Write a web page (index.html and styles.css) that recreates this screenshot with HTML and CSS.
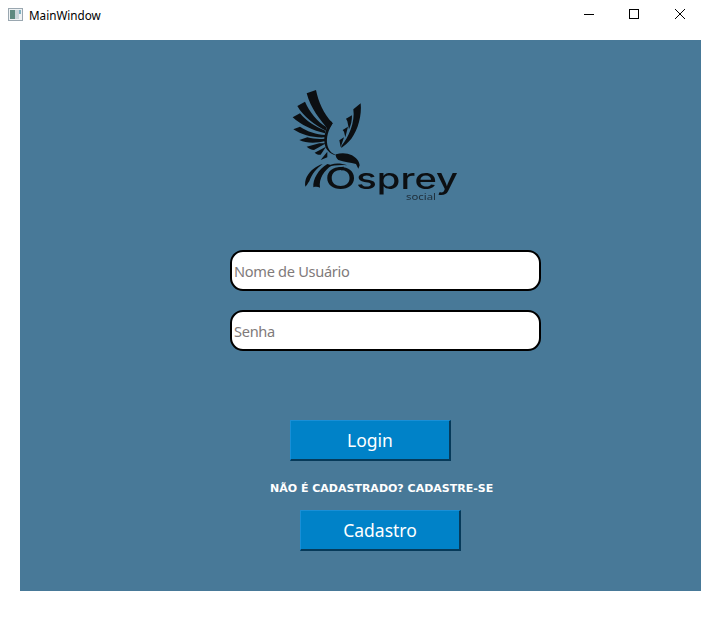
FILE: index.html
```html
<!DOCTYPE html>
<html lang="pt">
<head>
<meta charset="utf-8">
<title>MainWindow</title>
<link rel="stylesheet" href="styles.css">
</head>
<body>
<header class="titlebar">
  <div class="title">
    <svg class="app-icon" width="16" height="16" viewBox="0 0 16 16"><rect x="0.5" y="1.5" width="14" height="12" fill="#eef2f4" stroke="#9aa7b0"/><rect x="2" y="3" width="5" height="9" fill="#5d8a80"/><rect x="7" y="3" width="4" height="9" fill="#c9d6da"/><rect x="11" y="3" width="2" height="4" fill="#7fb0c0"/></svg>
    <span>MainWindow</span>
  </div>
  <div class="controls">
    <svg width="46" height="30" viewBox="0 0 46 30"><path d="M19 14.5h10" stroke="#000" fill="none"/></svg>
    <svg width="46" height="30" viewBox="0 0 46 30"><rect x="18.5" y="9.5" width="9" height="9" stroke="#000" fill="none"/></svg>
    <svg width="46" height="30" viewBox="0 0 46 30"><path d="M18 9l10 10M28 9L18 19" stroke="#000" fill="none"/></svg>
  </div>
</header>
<main class="panel">
  <svg class="logo" width="170" height="115" viewBox="0 0 170 115">
    <g transform="translate(-22 -9) scale(.33333)" fill="#0c0f12">
      <path d="M110 40L138 30C145 65 160 100 188 130L176 150C150 120 122 85 110 40Z"/>
      <path d="M82 78L105 65C118 95 142 125 170 142L168 152C135 135 100 110 82 78Z"/>
      <path d="M68 112L90 100C108 122 135 140 166 152L165 160C130 152 92 135 68 112Z"/>
      <path d="M70 148L90 140C112 155 140 163 165 165L165 172C130 174 95 165 70 148Z"/>
      <path d="M88 180L112 172C130 177 150 178 165 176L165 183C140 190 108 190 88 180Z"/>
      <path d="M110 200L148 190L168 190L132 210C124 209 116 205 110 200Z"/>
      <path d="M134 218L168 200L152 224C145 225 138 222 134 218Z"/>
      <path d="M152 240L172 215L172 232Z"/>
      <path d="M188 130C175 150 168 172 172 195C176 215 190 224 206 226C188 228 168 214 164 192C160 168 168 142 182 122Z"/>
      <path d="M198 223C214 218 232 219 246 226C258 233 268 243 269 256L265 266L258 252C242 248 222 245 205 240C200 236 196 230 198 223Z"/>
      <path d="M250 88L272 70C276 105 264 150 244 176C234 188 224 196 214 204L214 198C236 174 256 125 250 88Z"/>
      <path d="M228 116L246 106C246 122 243 136 237 148L232 124Z"/>
      <path d="M218 150L234 140L226 172L222 155Z"/>
      <path d="M208 181L222 172L212 202Z"/>
      <path d="M110 291C122 270 138 258 158 252C140 265 125 282 118 304C112 312 110 318 106 320C104 310 106 300 110 291Z"/>
      <path d="M130 322C128 298 145 268 172 252L186 256C162 272 146 296 150 323C144 320 136 320 130 322Z"/>
      <path d="M170 262C182 250 205 246 232 256C210 254 190 256 170 262Z"/>
      <path d="M205 262L222 260L216 272L211 267L208 270Z"/>
    </g>
    <text class="logo-word" x="33" y="100" textLength="133" lengthAdjust="spacingAndGlyphs"><tspan class="logo-cap">O</tspan>sprey</text>
    <text class="logo-sub" x="114" y="111" textLength="30" lengthAdjust="spacingAndGlyphs">social</text>
  </svg>
  <div class="field first"><span>Nome de Usuário</span></div>
  <div class="field second"><span>Senha</span></div>
  <button class="btn login" type="button">Login</button>
  <p class="hint">NÃO É CADASTRADO? CADASTRE-SE</p>
  <button class="btn signup" type="button">Cadastro</button>
</main>
</body>
</html>
```
FILE: styles.css
```css
* { box-sizing: border-box; }
html, body { margin: 0; height: 100%; background: #fff; overflow: hidden; }
body { font-family: "DejaVu Sans", sans-serif; }
.titlebar { height: 40px; display: flex; justify-content: space-between; align-items: flex-start; }
.title { display: flex; align-items: center; gap: 5px; height: 30px; padding-left: 8px; font: 11.7px "Noto Sans", sans-serif; color: #000; }
.controls { display: flex; }
.controls svg { display: block; }
.panel { width: 681px; height: 551px; margin-left: 20px; background: #487998; display: flex; flex-direction: column; align-items: flex-start; }
.logo { display: block; margin: 49px 0 0 272px; overflow: visible; filter: blur(0.35px); }
.logo-word { font-family: "Inter", sans-serif; font-weight: 500; font-size: 28px; fill: #0c0f12; }
.logo-cap { font-size: 30px; }
.logo-sub { font-family: "Noto Sans", sans-serif; font-size: 8px; fill: #20303c; }
.field { width: 311px; height: 41px; margin-left: 210px; background: #fff; border: 2px solid #000; border-radius: 13px; display: flex; align-items: center; padding: 1px 0 0 2px; font: 14.6px "Noto Sans", sans-serif; letter-spacing: -0.3px; color: #807a7a; }
.first { margin-top: 46px; }
.second { margin-top: 19px; }
.btn { display: block; width: 161px; height: 41px; background: #0082c8; color: #fff; font: 17.5px "Noto Sans", sans-serif; border: 1px solid; border-color: #1a8fd6 #063a5a #063a5a #1a8fd6; border-bottom-width: 2px; border-right-width: 2px; padding: 0; }
.login { margin: 69px 0 0 270px; }
.hint { margin: 20px 0 0 250px; height: 16px; line-height: 16px; font-size: 11px; font-weight: 700; color: #fff; white-space: nowrap; }
.signup { margin: 13px 0 0 280px; }
```
